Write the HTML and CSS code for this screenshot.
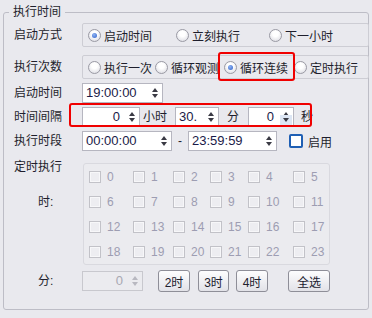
FILE: index.html
```html
<!DOCTYPE html>
<html lang="zh-CN">
<head>
  <meta charset="UTF-8">
  <title>执行时间</title>
  <link rel="stylesheet" href="styles.css">
</head>
<body>

<div class="group">
  <div class="group-title">执行时间</div>

  <!-- 启动方式 -->
  <div class="row row-radio first">
    <div class="row-label">启动方式</div>
    <div class="radio-panel">
      <div class="radio-item w88"><span class="radio on"></span>启动时间</div>
      <div class="radio-item w93"><span class="radio"></span>立刻执行</div>
      <div class="radio-item"><span class="radio"></span>下一小时</div>
    </div>
  </div>

  <!-- 执行次数 -->
  <div class="row row-radio second">
    <div class="row-label">执行次数</div>
    <div class="radio-panel">
      <div class="radio-item w67"><span class="radio"></span>执行一次</div>
      <div class="radio-item w69"><span class="radio"></span>循环观测</div>
      <div class="radio-item w70"><span class="radio on"></span>循环连续</div>
      <div class="radio-item"><span class="radio"></span>定时执行</div>
    </div>
  </div>

  <div class="row row-spin">
    <div class="row-label">启动时间</div>
    <div class="spin w81">
      <div class="spin-text">19:00:00</div>
      <div class="spin-btn"><i class="up"></i><i class="down"></i></div>
    </div>
  </div>

  <div class="row row-spin">
    <div class="row-label">时间间隔</div>
    <div class="spin w58">
      <div class="spin-text right">0</div>
      <div class="spin-btn"><i class="up"></i><i class="down"></i></div>
    </div>
    <span class="unit u1">小时</span>
    <div class="spin w44">
      <div class="spin-text">30.</div>
      <div class="spin-btn"><i class="up"></i><i class="down"></i></div>
    </div>
    <span class="unit u2">分</span>
    <div class="spin w46">
      <div class="spin-text right">0</div>
      <div class="spin-btn"><i class="up"></i><i class="down hover"></i></div>
    </div>
    <span class="unit u3">秒</span>
  </div>

  <div class="row row-spin">
    <div class="row-label">执行时段</div>
    <div class="spin w90">
      <div class="spin-text">00:00:00</div>
      <div class="spin-btn"><i class="up"></i><i class="down"></i></div>
    </div>
    <span class="dash">-</span>
    <div class="spin w89">
      <div class="spin-text">23:59:59</div>
      <div class="spin-btn"><i class="up"></i><i class="down"></i></div>
    </div>
    <span class="check-on"></span>
    <span class="check-label">启用</span>
  </div>

  <!-- 定时执行 -->
  <div class="sched">
    <div class="sched-labels">
      <div class="sched-title">定时执行</div>
      <div class="sched-hour">时:</div>
    </div>
    <div class="hour-grid" id="hourGrid"></div>
  </div>

  <div class="row row-min">
    <div class="row-label"><span class="min-label">分:</span></div>
    <div class="spin w61 disabled">
      <div class="spin-text right">0</div>
      <div class="spin-btn"><i class="up"></i><i class="down"></i></div>
    </div>
    <button class="btn b2">2时</button>
    <button class="btn b3">3时</button>
    <button class="btn b4">4时</button>
    <button class="btn ball">全选</button>
  </div>
</div>

<!-- 标注框 -->
<div class="mark mark-loop"></div>
<div class="mark mark-interval"></div>

<script>
  var grid = document.getElementById("hourGrid");
  for (var h = 0; h < 24; h++) {
    var cell = document.createElement("div");
    cell.className = "hour-cell";
    cell.innerHTML = '<span class="cb"></span>' + h;
    grid.appendChild(cell);
  }
</script>

</body>
</html>
```

FILE: styles.css
```css
body {
  margin: 0;
  width: 372px;
  height: 318px;
  background-color: #e9e9ee;
  font-family: "Liberation Sans", "Noto Sans CJK SC", sans-serif;
  font-size: 12px;
  color: #1e1e2c;
  position: relative;
  overflow: hidden;
}

.group {
  margin: 12px 3px 0 3px;
  height: 298px;
  box-sizing: border-box;
  border: 1px solid #bdbdc6;
  border-radius: 3px;
  padding-left: 10px;
}

.group-title {
  width: max-content;
  margin: -9px 0 0 -5px;
  padding: 0 4px;
  line-height: 16px;
  background-color: #e9e9ee;
}

.row {
  display: flex;
  align-items: center;
}

.row-label {
  width: 68px;
  flex: none;
  line-height: 16px;
}

.row-radio {
  height: 24px;
}

.row-radio.first {
  margin-top: 3px;
}

.row-radio.second {
  margin-top: 8px;
}

.radio-panel {
  flex: 1;
  height: 24px;
  box-sizing: border-box;
  border: 1px solid #cdcdd4;
  border-radius: 2px;
  display: flex;
  align-items: center;
  padding-left: 5px;
  margin-right: -1px;
  white-space: nowrap;
}

.radio-item {
  display: flex;
  align-items: center;
  flex: none;
}

.w88 { width: 88px; }
.w93 { width: 93px; }
.w67 { width: 67px; }
.w69 { width: 69px; }
.w70 { width: 70px; }

.radio {
  width: 13px;
  height: 13px;
  box-sizing: border-box;
  border-radius: 50%;
  border: 1px solid #9a9aa4;
  background: radial-gradient(circle at 50% 35%, #ffffff 30%, #d6d6de 100%);
  margin-right: 3px;
  position: relative;
  flex: none;
}

.radio.on::after {
  content: "";
  position: absolute;
  left: 3px;
  top: 3px;
  width: 5px;
  height: 5px;
  border-radius: 50%;
  background: radial-gradient(circle at 40% 35%, #8fb4f4, #2f5fc8);
}

.row-spin {
  height: 20px;
  margin-top: 4px;
}

.spin {
  display: flex;
  height: 20px;
  box-sizing: border-box;
  border: 1px solid #b6b6c0;
  background-color: #fff;
  flex: none;
}

.w81 { width: 81px; }
.w58 { width: 58px; }
.w44 { width: 44px; }
.w46 { width: 46px; }
.w90 { width: 90px; }
.w89 { width: 89px; }
.w61 { width: 61px; }

.spin-text {
  flex: 1;
  font-size: 13px;
  line-height: 18px;
  padding-left: 3px;
  color: #1a1a48;
  overflow: hidden;
  white-space: nowrap;
}

.spin-text.right {
  text-align: right;
  padding: 0 4px 0 0;
}

.spin-btn {
  width: 15px;
  flex: none;
  display: flex;
  flex-direction: column;
  align-items: center;
  justify-content: center;
  gap: 2px;
}

.spin-btn i {
  display: block;
  width: 0;
  height: 0;
  border-left: 3.5px solid transparent;
  border-right: 3.5px solid transparent;
}

.spin-btn .up {
  border-bottom: 4px solid #3a3a44;
}

.spin-btn .down {
  border-top: 4px solid #3a3a44;
}

.spin-btn .down.hover {
  box-shadow: 0 0 0 3px #dde6f4;
  background-color: #dde6f4;
}

.unit {
  line-height: 16px;
}

.u1 { margin: 0 8px 0 3px; }
.u2 { margin: 0 9px 0 8px; }
.u3 { margin-left: 7px; }

.dash {
  width: 16px;
  text-align: center;
}

.check-on {
  width: 14px;
  height: 14px;
  box-sizing: border-box;
  border: 2px solid #1f5fb4;
  border-radius: 2px;
  background-color: #fff;
  margin: 0 5px 0 12px;
}

.sched {
  display: flex;
  margin-top: 12px;
}

.sched-labels {
  width: 69px;
  flex: none;
  line-height: 16px;
}

.sched-title {
  margin-top: -4px;
}

.sched-hour {
  margin-top: 19px;
  padding-left: 24px;
}

.hour-grid {
  width: 247px;
  height: 102px;
  box-sizing: border-box;
  border: 1px solid #d9d9df;
  border-radius: 3px;
  background-color: #ebebef;
  padding-left: 5px;
  display: grid;
  grid-template-columns: 44px 40px 37px 38px 45px 36px;
  grid-auto-rows: 25px;
}

.hour-cell {
  display: flex;
  align-items: center;
  color: #9d9db2;
  font-size: 12px;
}

.cb {
  width: 12px;
  height: 12px;
  box-sizing: border-box;
  border: 1px solid #c2c2c8;
  background-color: #ededf1;
  box-shadow: inset 0 0 0 1px #f7f7f9;
  margin-right: 6px;
  flex: none;
}

.row-min {
  height: 22px;
  margin-top: 5px;
}

.min-label {
  padding-left: 24px;
}

.spin.disabled {
  background-color: #ebebef;
  border-color: #c8c8ce;
}

.spin.disabled .spin-text {
  color: #a8a8b2;
}

.spin.disabled .up {
  border-bottom-color: #b8b8c0;
}

.spin.disabled .down {
  border-top-color: #b8b8c0;
}

.btn {
  height: 22px;
  padding: 0;
  box-sizing: border-box;
  border: 1px solid #8e8e98;
  border-radius: 3px;
  background: linear-gradient(#fdfdfe, #e2e2e8);
  font-family: "Liberation Sans", "Noto Sans CJK SC", sans-serif;
  font-size: 12px;
  color: #20202e;
  flex: none;
}

.b2 { width: 32px; margin-left: 15px; }
.b3 { width: 31px; margin-left: 8px; }
.b4 { width: 32px; margin-left: 7px; }
.ball { width: 42px; margin-left: 20px; }

.mark {
  position: absolute;
  box-sizing: border-box;
  border: 2px solid #f00000;
  border-radius: 3px;
}

.mark-loop {
  left: 218px;
  top: 52px;
  width: 77px;
  height: 29px;
}

.mark-interval {
  left: 69px;
  top: 103px;
  width: 243px;
  height: 24px;
}
```
